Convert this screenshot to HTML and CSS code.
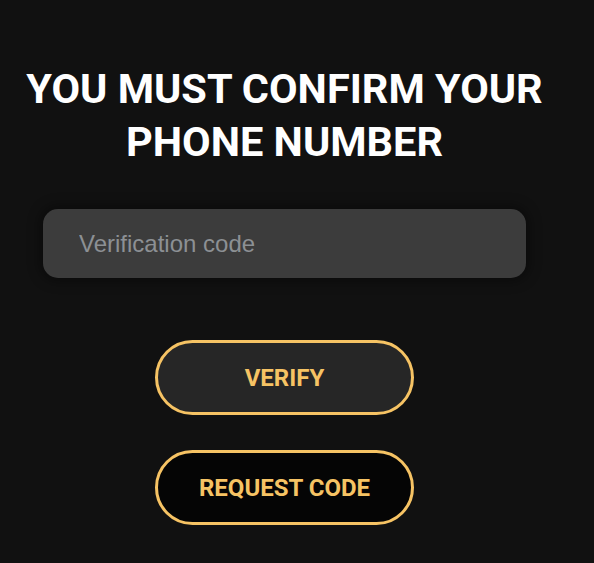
FILE: index.html
```html
<!DOCTYPE html>
<html lang="en">
<head>
<meta charset="utf-8">
<title>Confirm phone</title>
<link rel="stylesheet" href="styles.css">
</head>
<body>
<main class="page">
  <h1 class="title">YOU MUST CONFIRM YOUR<br>PHONE NUMBER</h1>
  <form class="form">
    <input class="code-input" type="text" placeholder="Verification code">
    <div class="actions">
      <button type="button" class="btn btn-verify">VERIFY</button>
      <button type="button" class="btn btn-request">REQUEST CODE</button>
    </div>
  </form>
</main>
</body>
</html>
```

FILE: styles.css
```css
html, body {
  margin: 0;
  padding: 0;
  background: #111111;
}
.page {
  width: 569px;
  padding-top: 62px;
  display: flex;
  flex-direction: column;
  align-items: center;
  font-family: Roboto, "Liberation Sans", sans-serif;
}
.title {
  margin: 0;
  color: #ffffff;
  font-family: Roboto, sans-serif;
  font-weight: 700;
  font-size: 41.5px;
  line-height: 53px;
  text-align: center;
}
.form {
  margin-top: 41px;
  display: flex;
  flex-direction: column;
  align-items: center;
}
.code-input {
  box-sizing: border-box;
  width: 483px;
  height: 69px;
  border: none;
  border-radius: 15px;
  background: #3c3c3c;
  box-shadow: 0 0 12px 4px rgba(0,0,0,0.35);
  padding: 0 36px;
  font-family: "Liberation Sans", Arial, sans-serif;
  font-size: 24px;
  color: #dddddd;
  outline: none;
}
.code-input::placeholder {
  color: #8c9094;
}
.actions {
  margin-top: 62px;
  display: flex;
  flex-direction: column;
  align-items: center;
  gap: 35px;
}
.btn {
  box-sizing: border-box;
  width: 259px;
  height: 75px;
  border: 3px solid #f6c364;
  border-radius: 38px;
  font-family: Roboto, sans-serif;
  font-weight: 700;
  font-size: 24px;
  color: #f6c364;
  cursor: pointer;
}
.btn-verify {
  background: #262626;
}
.btn-request {
  background: #050505;
}
```
